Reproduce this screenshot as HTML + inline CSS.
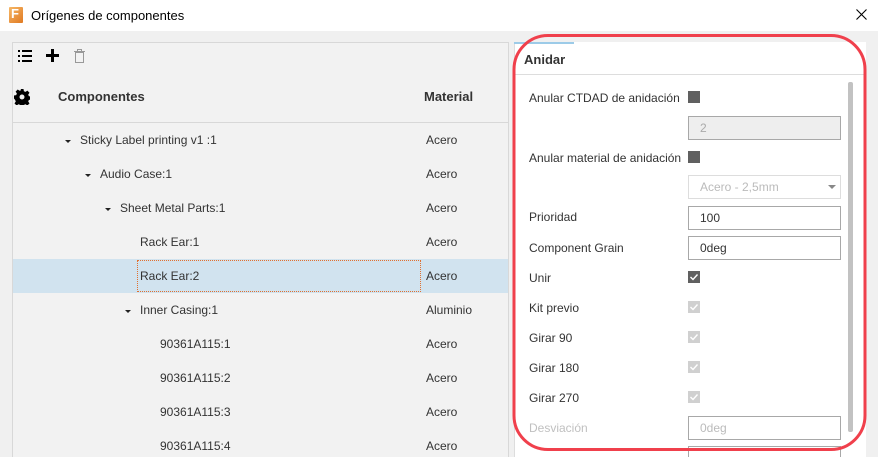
<!DOCTYPE html>
<html style="width:878px;height:457px;overflow:hidden"><head><meta charset="utf-8"><style>
*{margin:0;padding:0;box-sizing:border-box}
body{width:878px;height:457px;overflow:hidden;background:#f0f0f0;font-family:"Liberation Sans",sans-serif;font-size:12px;color:#333;position:relative}
.a{position:absolute}
.row{position:absolute;left:13px;width:495px;height:34px;line-height:35px}
.row span{position:absolute}
.lbl{position:absolute;left:529px;font-size:12px;color:#333}
.cb{position:absolute;left:688px;width:12px;height:12px;background:#606060}
.ck{position:absolute;left:688px;width:12px;height:12px;background:#606060}
.ck.d{background:#d0d0d0}
.ck svg{position:absolute;left:1px;top:1px}
.inp{position:absolute;left:688px;width:153px;height:24px;border:1px solid #a8a8a8;background:#fff;padding-left:11px;line-height:22px;font-size:12px;color:#333}
.tri{position:absolute;width:0;height:0;border-left:3px solid transparent;border-right:3px solid transparent;border-top:3px solid #222}
</style></head><body>
<div class="a" style="left:0;top:0;width:878px;height:31px;background:#fff"></div>
<div class="a" style="left:9px;top:7px;width:14px;height:16px;background:linear-gradient(135deg,#f6b766,#e07a22);border-radius:1px"></div>
<div class="a" style="left:11px;top:6px;font-size:13px;font-weight:bold;color:#fff">F</div>
<div class="a" style="left:31px;top:8px;font-size:13px;color:#000">Orígenes de componentes</div>
<svg class="a" style="left:856px;top:9px" width="11" height="11"><path d="M0.5 0.5l10 10M10.5 0.5l-10 10" stroke="#000" stroke-width="1.1"/></svg>

<div class="a" style="left:12px;top:42px;width:497px;height:420px;border:1px solid #d8d8d8;background:#f2f2f2"></div>
<svg class="a" style="left:18px;top:50px" width="14" height="12"><g fill="#000"><rect x="0" y="0" width="2" height="2"/><rect x="4" y="0" width="10" height="2"/><rect x="0" y="5" width="2" height="2"/><rect x="4" y="5" width="10" height="2"/><rect x="0" y="10" width="2" height="2"/><rect x="4" y="10" width="10" height="2"/></g></svg>
<svg class="a" style="left:46px;top:49px" width="13" height="13"><rect x="5" y="0" width="3" height="13" fill="#000"/><rect x="0" y="5" width="13" height="3" fill="#000"/></svg>
<svg class="a" style="left:74px;top:49px" width="11" height="14"><g fill="none" stroke="#999" stroke-width="1"><rect x="1.5" y="3.5" width="8" height="10"/><line x1="0" y1="2.5" x2="11" y2="2.5"/><rect x="3.5" y="0.5" width="4" height="2"/></g></svg>
<svg class="a" style="left:14px;top:89px" width="16" height="16" viewBox="0 0 16 16"><path fill="#000" d="M6.5 0h3l.4 2.2 1.6.7 1.9-1.3 2.1 2.1-1.3 1.9.7 1.6 2.1.3v3l-2.1.4-.7 1.6 1.3 1.9-2.1 2.1-1.9-1.3-1.6.7-.4 2.1h-3l-.4-2.1-1.6-.7-1.9 1.3-2.1-2.1 1.3-1.9-.7-1.6L0 9.5v-3l2.2-.4.7-1.6-1.3-1.9 2.1-2.1 1.9 1.3 1.6-.7zM8 5.5a2.5 2.5 0 100 5 2.5 2.5 0 100-5z"/></svg>
<div class="a" style="left:58px;top:89px;font-weight:bold;font-size:13px;color:#333">Componentes</div>
<div class="a" style="left:424px;top:89px;font-weight:bold;font-size:13px;color:#333">Material</div>
<div class="a" style="left:13px;top:122px;width:495px;height:1px;background:#d8d8d8"></div>

<div class="row" style="top:123px"><div class="tri" style="left:52px;top:17px"></div><span style="left:67px">Sticky Label printing v1 :1</span><span style="left:413px">Acero</span></div>
<div class="row" style="top:157px"><div class="tri" style="left:72px;top:17px"></div><span style="left:87px">Audio Case:1</span><span style="left:413px">Acero</span></div>
<div class="row" style="top:191px"><div class="tri" style="left:92px;top:17px"></div><span style="left:107px">Sheet Metal Parts:1</span><span style="left:413px">Acero</span></div>
<div class="row" style="top:225px"><span style="left:127px">Rack Ear:1</span><span style="left:413px">Acero</span></div>
<div class="row" style="top:259px;background:#d1e3ef"><div class="a" style="left:124px;top:1px;width:284px;height:32px;border:1px dotted #e07030"></div><span style="left:127px">Rack Ear:2</span><span style="left:413px">Acero</span></div>
<div class="row" style="top:293px"><div class="tri" style="left:112px;top:17px"></div><span style="left:127px">Inner Casing:1</span><span style="left:413px">Aluminio</span></div>
<div class="row" style="top:327px"><span style="left:147px">90361A115:1</span><span style="left:413px">Acero</span></div>
<div class="row" style="top:361px"><span style="left:147px">90361A115:2</span><span style="left:413px">Acero</span></div>
<div class="row" style="top:395px"><span style="left:147px">90361A115:3</span><span style="left:413px">Acero</span></div>
<div class="row" style="top:429px"><span style="left:147px">90361A115:4</span><span style="left:413px">Acero</span></div>

<div class="a" style="left:514px;top:42px;width:352px;height:420px;background:#fff;border-left:1px solid #ddd"></div>
<div class="a" style="left:514px;top:42px;width:60px;height:2px;background:#9ccbe8"></div>
<div class="a" style="left:524px;top:52px;font-weight:bold;font-size:13px;color:#333">Anidar</div>
<div class="a" style="left:514px;top:74px;width:352px;height:1px;background:#ddd"></div>
<div class="a" style="left:848px;top:82px;width:5px;height:350px;background:#c2c2c2;border-radius:2px"></div>

<div class="lbl" style="top:91px">Anular CTDAD de anidación</div><div class="cb" style="top:91px"></div>
<div class="inp" style="top:116px;background:#eee;color:#aaa">2</div>
<div class="lbl" style="top:151px">Anular material de anidación</div><div class="cb" style="top:151px"></div>
<div class="inp" style="top:175px;border-color:#ddd;color:#bbb">Acero - 2,5mm<div class="tri" style="left:139px;top:9px;border-top-color:#888;border-left-width:4px;border-right-width:4px;border-top-width:4px"></div></div>
<div class="lbl" style="top:210px">Prioridad</div><div class="inp" style="top:206px">100</div>
<div class="lbl" style="top:241px">Component Grain</div><div class="inp" style="top:236px">0deg</div>
<div class="lbl" style="top:271px">Unir</div><div class="ck" style="top:271px"><svg width="10" height="10"><path d="M1.5 5l2.5 2.5 4.5-5" stroke="#fff" stroke-width="1.4" fill="none"/></svg></div>
<div class="lbl" style="top:301px">Kit previo</div><div class="ck d" style="top:301px"><svg width="10" height="10"><path d="M1.5 5l2.5 2.5 4.5-5" stroke="#fff" stroke-width="1.4" fill="none"/></svg></div>
<div class="lbl" style="top:331px">Girar 90</div><div class="ck d" style="top:331px"><svg width="10" height="10"><path d="M1.5 5l2.5 2.5 4.5-5" stroke="#fff" stroke-width="1.4" fill="none"/></svg></div>
<div class="lbl" style="top:361px">Girar 180</div><div class="ck d" style="top:361px"><svg width="10" height="10"><path d="M1.5 5l2.5 2.5 4.5-5" stroke="#fff" stroke-width="1.4" fill="none"/></svg></div>
<div class="lbl" style="top:391px">Girar 270</div><div class="ck d" style="top:391px"><svg width="10" height="10"><path d="M1.5 5l2.5 2.5 4.5-5" stroke="#fff" stroke-width="1.4" fill="none"/></svg></div>
<div class="lbl" style="top:421px;color:#c0c0c0">Desviación</div><div class="inp" style="top:416px;color:#bbb">0deg</div>
<div class="a" style="left:688px;top:446px;width:153px;height:11px;border:1px solid #a8a8a8;border-bottom:none;background:#fff"></div>

<svg class="a" style="left:0;top:0" width="878" height="457"><rect x="514" y="35.5" width="351" height="414" rx="34" ry="34" fill="none" stroke="#f0404c" stroke-width="3"/></svg>
</body></html>
